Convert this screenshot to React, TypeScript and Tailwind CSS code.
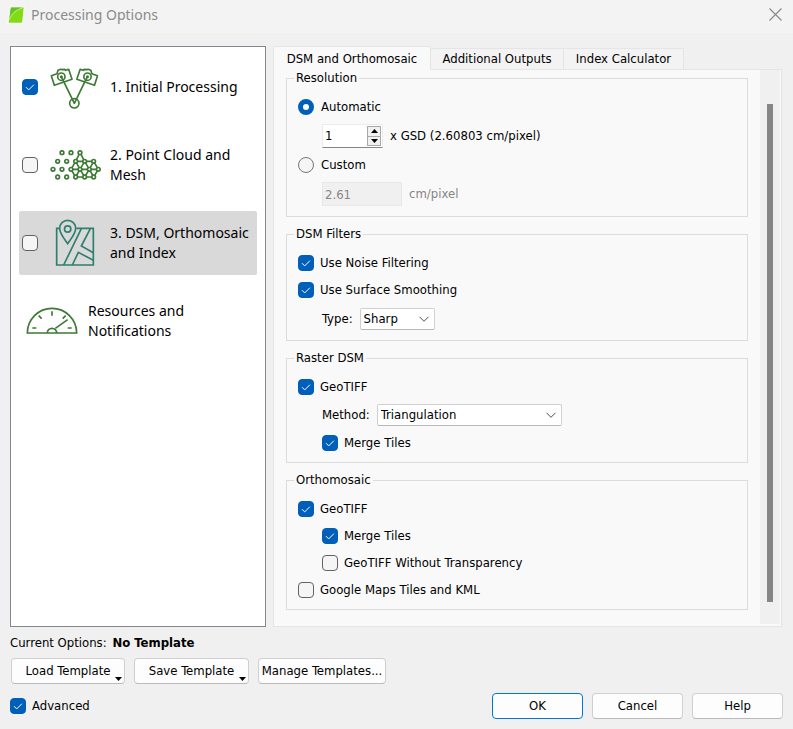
import { useState, type ReactNode } from "react";

const uiFont = "font-['DejaVu_Sans_Condensed','DejaVu_Sans',sans-serif]";
const titleFont = "font-['Noto_Sans',sans-serif]";

function CheckBox({ checked = false, label }: { checked?: boolean; label?: string }) {
  const [on, setOn] = useState(checked);
  return (
    <span className="grid size-4 shrink-0 place-items-center">
      <input
        type="checkbox"
        aria-label={label}
        checked={on}
        onChange={(e) => setOn(e.target.checked)}
        className="col-start-1 row-start-1 size-4 appearance-none rounded-[4px] border border-[#626262] bg-[#f5f5f5] checked:border-[#005fb8] checked:bg-[#005fb8]"
      />
      {on && (
        <svg className="pointer-events-none col-start-1 row-start-1 size-4" viewBox="0 0 16 16" fill="none" stroke="white" strokeWidth="1">
          <path d="M4 8.200l2.700 2.700 5.200-5.200" />
        </svg>
      )}
    </span>
  );
}

function CheckRow({ text, checked, className = "" }: { text: string; checked?: boolean; className?: string }) {
  return (
    <label className={`flex h-[18px] w-fit items-center gap-1.5 ${className}`}>
      <CheckBox checked={checked} />
      <span>{text}</span>
    </label>
  );
}

function RadioRow({ text, value, current, onPick }: { text: string; value: string; current: string; onPick: (v: string) => void }) {
  return (
    <label className="flex h-[18px] w-fit items-center gap-[7px]">
      <input
        type="radio"
        name="resolution"
        value={value}
        checked={current === value}
        onChange={() => onPick(value)}
        className="size-4 shrink-0 appearance-none rounded-full border border-[#757575] bg-[#f5f5f5] checked:border-[5px] checked:border-[#005fb8] checked:bg-white"
      />
      <span>{text}</span>
    </label>
  );
}

function Group({ title, gap, children }: { title: string; gap: string; children: ReactNode }) {
  return (
    <fieldset className="border border-[#dcdcdc] px-[11px] pt-3 pb-[10px]">
      <legend className="-ml-1 h-4 px-[2px] leading-4">{title}</legend>
      <div className={`flex flex-col ${gap}`}>{children}</div>
    </fieldset>
  );
}

function SelectRow({ id, label, options, width }: { id: string; label: string; options: string[]; width: string }) {
  return (
    <div className="ml-6 flex h-[22px] items-center gap-[7px]">
      <label htmlFor={id}>{label}</label>
      <span className={`grid items-center ${width}`}>
        <select
          id={id}
          className="col-start-1 row-start-1 h-[22px] w-full appearance-none rounded-[2px] border border-[#d0d0d0] border-b-[#b8b8b8] bg-white pl-[3px]"
        >
          {options.map((o) => (
            <option key={o}>{o}</option>
          ))}
        </select>
        <svg className="pointer-events-none col-start-1 row-start-1 mr-[5px] h-3 w-3 justify-self-end" viewBox="0 0 12 12" fill="none" stroke="#505050">
          <path d="M1.500 3.800L6 8.300l4.500-4.500" />
        </svg>
      </span>
    </div>
  );
}

function PushButton({ children, className = "", menu = false }: { children: ReactNode; className?: string; menu?: boolean }) {
  return (
    <button
      type="button"
      className={`relative h-[26px] rounded-[4px] border bg-[#fdfdfd] whitespace-nowrap ${className}`}
      aria-haspopup={menu ? "menu" : undefined}
    >
      {children}
      {menu && (
        <svg className="absolute right-0.5 bottom-0.5 h-1 w-[7px]" viewBox="0 0 7 4" fill="black">
          <path d="M0 0h7L3.500 4z" />
        </svg>
      )}
    </button>
  );
}

function LogoIcon() {
  return (
    <svg className="h-[18px] w-[18px]" viewBox="22 14 54 56">
      <path d="M31 16h45l-6 54H22z" fill="#fff" />
      <path d="M33 19h40l-5 47H26z" fill="#82db16" />
      <path d="M33 19h36C48 25 34 36 28 56z" fill="#62c32c" />
      <path d="M71 19C50 26 35 37 28 57" fill="none" stroke="#d3f59a" strokeWidth="2.500" />
    </svg>
  );
}

function Camera() {
  return (
    <>
      <path d="M154 227l17-6 3-10 8-3 4 1 8-1 3 3 9-3 10 30-53 18z" />
      <circle cx="184" cy="230" r="11" />
      <circle cx="184" cy="230" r="2" />
    </>
  );
}

function CamerasIcon() {
  return (
    <svg className="h-[45px] w-[50px]" viewBox="150 195 150 135" fill="none" stroke="#3d7a35" strokeWidth="5" strokeLinejoin="round">
      <Camera />
      <g transform="translate(446.500 0) scale(-1 1)">
        <Camera />
      </g>
      <path d="M184 230l39 80 39-80" />
      <circle cx="223" cy="310" r="14" />
    </svg>
  );
}

const cloudDots = [
  [185, 461], [212, 461], [239, 461],
  [172, 487], [199, 487], [226, 487], [253, 487], [280, 487],
  [158, 511], [185, 511], [212, 511], [239, 511], [267, 511], [294, 511],
  [172, 534], [199, 534], [226, 534], [253, 534], [280, 534],
];

function PointCloudIcon() {
  return (
    <svg className="h-8 w-[51px]" viewBox="149 450 153 96" fill="none" stroke="#3d7a35" strokeWidth="5">
      <path d="M226 487l13-26 14 26M226 487h54M212 511h82M226 534h54M212 511l14-24 13 24 14-24 14 24 13-24 14 24M212 511l14 23 13-23 14 23 14-23 13 23 14-23" />
      {cloudDots.map(([x, y]) => (
        <circle key={`${x}-${y}`} cx={x} cy={y} r="5.500" fill="#fff" />
      ))}
    </svg>
  );
}

function MapIcon() {
  return (
    <svg className="h-[49px] w-[40px]" viewBox="162 56 120 147" fill="none" stroke="#2e7f6c" strokeWidth="5">
      <path d="M176 84h-9v110h110V84h-51" />
      <path d="M200 130c-6-10-24-28-24-46a24 24 0 0 1 48 0c0 18-18 36-24 46z" />
      <circle cx="200" cy="86" r="9.500" />
      <path d="M241 85l-53 109M268 85l-27 52 36 20M214 194l18-38 45 24" />
    </svg>
  );
}

function GaugeIcon() {
  return (
    <svg className="h-[28px] w-[52px] shrink-0" viewBox="78 326 156 84" fill="none" stroke="#3d7a35" strokeWidth="5">
      <path d="M82 404a74 74 0 0 1 148 0z" />
      <path d="M97 389h12M203 389h12M156 339v13M116 352l9 9M197 352l-9 9M166 390l37-26" />
      <path d="M142 404a14 14 0 0 1 28 0" />
    </svg>
  );
}

function StepItem({ icon, lines, checked, selected }: { icon: ReactNode; lines: string[]; checked?: boolean; selected?: boolean }) {
  const name = lines.join(" ");
  return (
    <li className={`flex h-16 items-center rounded-[2px] pl-[3px] ${selected ? "bg-[#d9d9d9]" : ""}`}>
      <CheckBox checked={checked} label={name} />
      <span className="ml-[11px] flex w-[52px] shrink-0 justify-center">{icon}</span>
      <a href="#step" className="ml-[9px] whitespace-nowrap">
        {lines.map((l) => (
          <span key={l} className="block">{l}</span>
        ))}
      </a>
    </li>
  );
}

export default function App() {
  const [mode, setMode] = useState("auto");
  return (
    <div className={`flex min-h-screen flex-col bg-[#f0f0f0] text-[13px] leading-4 text-black ${uiFont}`}>
      <header className={`flex h-[33px] items-center justify-between bg-[#f3f3f3] pr-[11px] pb-1 pl-[7px] ${titleFont}`}>
        <div className="flex items-center gap-1.5">
          <LogoIcon />
          <h1 className="text-[14px] leading-5 text-[#8b8b8b]">Processing Options</h1>
        </div>
        <button type="button" aria-label="Close">
          <svg className="size-[13px]" viewBox="0 0 13 13" stroke="#8a8a8a" strokeWidth="1.200">
            <path d="M.5.5l12 12M12.500.5l-12 12" />
          </svg>
        </button>
      </header>

      <main className="flex flex-1 gap-[7px] pt-[13px] pr-[11px] pl-[10px]">
        <nav className={`w-[256px] shrink-0 border border-[#828790] bg-white p-2 text-[14px] leading-5 ${titleFont}`}>
          <ul className="flex flex-col gap-[14px]">
            <StepItem icon={<CamerasIcon />} lines={["1. Initial Processing"]} checked />
            <StepItem icon={<PointCloudIcon />} lines={["2. Point Cloud and", "Mesh"]} />
            <StepItem icon={<MapIcon />} lines={["3. DSM, Orthomosaic", "and Index"]} selected />
            <li className="flex h-16 items-center gap-[10px] pl-[7px]">
              <GaugeIcon />
              <a href="#resources">
                Resources and
                <br />
                Notifications
              </a>
            </li>
          </ul>
        </nav>

        <section className="flex min-w-0 flex-1 flex-col">
          <div role="tablist" className="flex h-[23px] items-end">
            <button type="button" role="tab" aria-selected="true" className="z-10 -mb-px h-6 w-[158px] rounded-t-[2px] border border-b-0 border-[#e5e5e5] bg-[#f9f9f9] whitespace-nowrap">
              DSM and Orthomosaic
            </button>
            <button type="button" role="tab" aria-selected="false" className="h-[21px] w-[133px] border-t border-r border-[#e5e5e5] bg-[#f3f3f3] whitespace-nowrap">
              Additional Outputs
            </button>
            <button type="button" role="tab" aria-selected="false" className="h-[21px] w-[120px] border-t border-r border-[#e5e5e5] bg-[#f3f3f3] whitespace-nowrap">
              Index Calculator
            </button>
          </div>

          <div role="tabpanel" className="flex flex-1 border border-[#e5e5e5] bg-[#f9f9f9] pr-px pb-0.5">
            <form className="flex min-w-0 flex-1 flex-col gap-[9px] px-3 pb-3">
              <Group title="Resolution" gap="gap-2">
                <RadioRow text="Automatic" value="auto" current={mode} onPick={setMode} />
                <div className="ml-6 flex items-center gap-[7px]">
                  <span className="flex h-6 w-[61px] border border-[#ececec] border-b-[#868686] bg-white">
                    <input
                      id="gsd"
                      type="text"
                      inputMode="numeric"
                      defaultValue="1"
                      className="min-w-0 flex-1 pl-0.5"
                    />
                    <span className="flex w-[15px] flex-col pt-px pr-px pb-px">
                      <button type="button" aria-label="Increase" className="flex flex-1 items-center justify-center border border-[#a8a8a8] bg-[#f0f0f0]">
                        <svg className="h-1 w-[7px]" viewBox="0 0 7 4"><path d="M0 4h7L3.500 0z" /></svg>
                      </button>
                      <button type="button" aria-label="Decrease" className="flex flex-1 items-center justify-center border border-t-0 border-[#a8a8a8] bg-[#f0f0f0]">
                        <svg className="h-1 w-[7px]" viewBox="0 0 7 4"><path d="M0 0h7L3.500 4z" /></svg>
                      </button>
                    </span>
                  </span>
                  <label htmlFor="gsd">x GSD (2.60803 cm/pixel)</label>
                </div>
                <RadioRow text="Custom" value="custom" current={mode} onPick={setMode} />
                <div className="ml-6 flex items-center gap-[7px] text-[#868686]">
                  <input
                    id="custom-size"
                    type="text"
                    defaultValue="2.61"
                    disabled={mode !== "custom"}
                    className="h-6 w-20 border border-[#e8e8e8] bg-[#f0f0f0] pl-0.5"
                  />
                  <label htmlFor="custom-size">cm/pixel</label>
                </div>
              </Group>

              <Group title="DSM Filters" gap="gap-[9px]">
                <CheckRow text="Use Noise Filtering" checked />
                <CheckRow text="Use Surface Smoothing" checked />
                <SelectRow id="type" label="Type:" options={["Sharp", "Smooth", "Medium"]} width="w-[75px]" />
              </Group>

              <Group title="Raster DSM" gap="gap-2">
                <CheckRow text="GeoTIFF" checked />
                <SelectRow id="method" label="Method:" options={["Triangulation", "Inverse Distance Weighting"]} width="w-[185px]" />
                <CheckRow text="Merge Tiles" checked className="ml-6" />
              </Group>

              <Group title="Orthomosaic" gap="gap-[9px]">
                <CheckRow text="GeoTIFF" checked />
                <CheckRow text="Merge Tiles" checked className="ml-6" />
                <CheckRow text="GeoTIFF Without Transparency" className="ml-6" />
                <CheckRow text="Google Maps Tiles and KML" />
              </Group>
            </form>
            <div className="flex w-5 shrink-0 justify-center bg-[#f0f0f0] pt-[34px] pb-[22px]">
              <div className="w-1.5 bg-[#868686]" />
            </div>
          </div>
        </section>
      </main>

      <footer className="px-[10px] pt-2 pb-[10px]">
        <p className="mb-[7px]">
          Current Options: <strong className="ml-[2px]">No Template</strong>
        </p>
        <div className="ml-px flex gap-[9px]">
          <PushButton menu className="w-[114px] border-[#d0d0d0] border-b-[#bababa]">Load Template</PushButton>
          <PushButton menu className="w-[115px] border-[#d0d0d0] border-b-[#bababa]">Save Template</PushButton>
          <PushButton className="w-[128px] border-[#d0d0d0] border-b-[#bababa]">Manage Templates...</PushButton>
        </div>
        <div className="mt-[9px] flex items-center justify-between">
          <CheckRow text="Advanced" checked />
          <div className="flex gap-[9px]">
            <PushButton className="w-[91px] border-[#0078d4]">OK</PushButton>
            <PushButton className="w-[91px] border-[#d0d0d0] border-b-[#bababa]">Cancel</PushButton>
            <PushButton className="w-[91px] border-[#d0d0d0] border-b-[#bababa]">Help</PushButton>
          </div>
        </div>
      </footer>
    </div>
  );
}
